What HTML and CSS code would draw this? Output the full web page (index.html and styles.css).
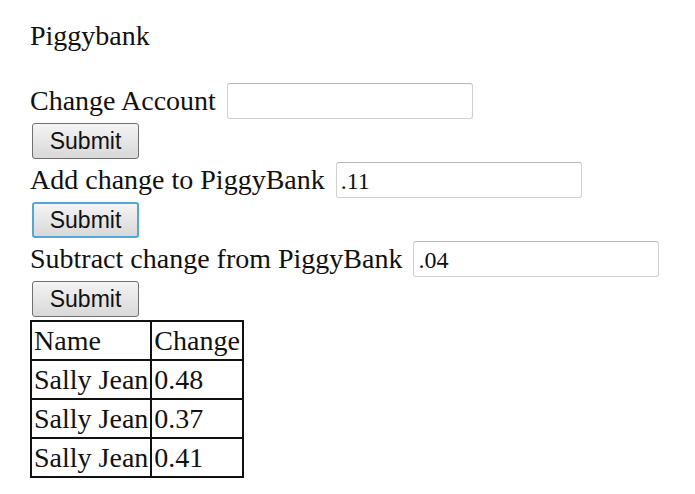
FILE: index.html
```html
<!DOCTYPE html>
<html lang="en">
<head>
    <meta charset="UTF-8">
    <meta name="viewport" content="width=device-width, initial-scale=1.0">
    <title>Piggybank</title>
    <link rel="stylesheet" href="styles.css">
</head>
<body>
    <div class="page">
        <p class="title">Piggybank</p>

        <form class="bank-form">
            <div class="field">
                <label for="account">Change Account</label>
                <input type="text" id="account" name="account">
            </div>
            <button type="submit" class="btn">Submit</button>

            <div class="field">
                <label for="addChange">Add change to PiggyBank</label>
                <input type="text" id="addChange" name="addChange" value=".11">
            </div>
            <button type="submit" class="btn btn-focus">Submit</button>

            <div class="field">
                <label for="subChange">Subtract change from PiggyBank</label>
                <input type="text" id="subChange" name="subChange" value=".04">
            </div>
            <button type="submit" class="btn">Submit</button>
        </form>

        <table class="bank-table">
            <tr><td>Name</td><td>Change</td></tr>
            <tr><td>Sally Jean</td><td>0.48</td></tr>
            <tr><td>Sally Jean</td><td>0.37</td></tr>
            <tr><td>Sally Jean</td><td>0.41</td></tr>
        </table>
    </div>
</body>
</html>
```

FILE: styles.css
```css
body {
    margin: 0;
    font-family: "Liberation Serif", "Times New Roman", serif;
    font-size: 28px;
    color: #111;
    background: #fff;
}

.page {
    padding: 20px 0 0 30px;
}

.title {
    margin: 0 0 31px 0;
    line-height: 32px;
}

.bank-form {
    display: flex;
    flex-direction: column;
    align-items: flex-start;
}

.field {
    display: flex;
    align-items: center;
    gap: 11px;
    height: 36px;
}

.field label {
    line-height: 32px;
}

.field input {
    box-sizing: border-box;
    width: 246px;
    height: 36px;
    margin: 0;
    padding: 2px 4px 0;
    font-family: "Liberation Serif", "Times New Roman", serif;
    font-size: 24px;
    color: #111;
    border: 1px solid #d0d0d0;
    border-top-color: #b8b8b8;
    border-radius: 3px;
    background: #fff;
}

.btn {
    box-sizing: border-box;
    width: 107px;
    height: 36px;
    margin: 4px 0 3px 2px;
    padding: 0;
    font-family: "Liberation Sans", Arial, sans-serif;
    font-size: 23px;
    color: #111;
    border: 1px solid #707070;
    border-radius: 3px;
    background: linear-gradient(#f4f4f4, #e6e6e6 50%, #d8d8d8);
}

.btn-focus {
    border: 2px solid #55a6d8;
}

.bank-table {
    border-collapse: collapse;
    border: 2px solid #111;
}

.bank-table td {
    border: 2px solid #111;
    padding: 2px 2px 2px 2px;
    line-height: 33px;
}
```
